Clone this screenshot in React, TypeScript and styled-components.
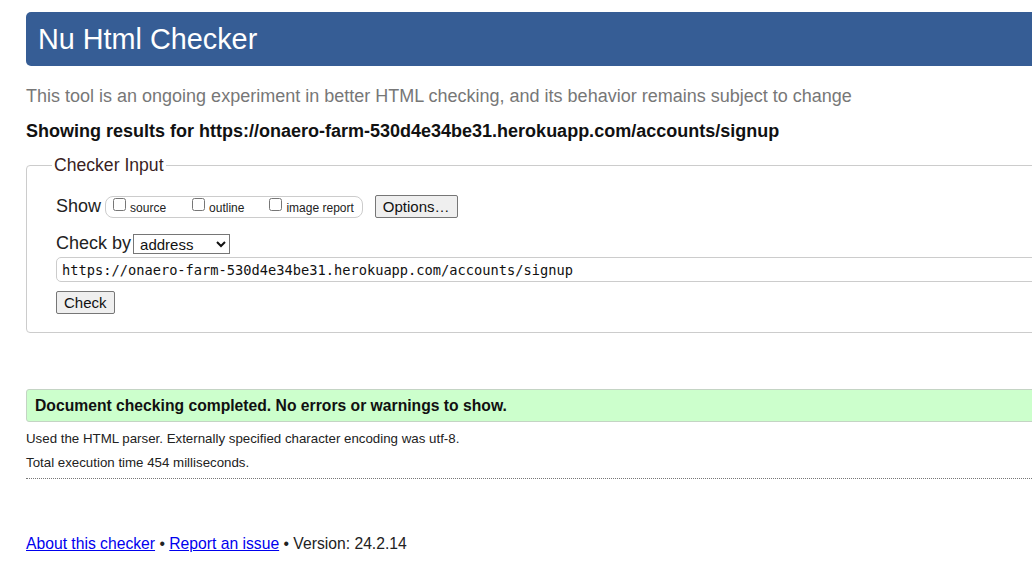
import React from "react";
import styled, { createGlobalStyle } from "styled-components";

const Global = createGlobalStyle`
  html, body { margin: 0; padding: 0; overflow: hidden; background: #fff; }
  body { font-family: "Liberation Sans", Arial, sans-serif; color: #222; }
`;

const Page = styled.div`
  width: 1140px;
  padding: 12px 0 0 26px;
`;

const Header = styled.h1`
  margin: 0;
  height: 54px;
  display: flex;
  align-items: center;
  padding-left: 12px;
  background: #365d95;
  border-radius: 5px;
  color: #fff;
  font-size: 28.8px;
  font-weight: normal;
`;

const Intro = styled.p`
  margin: 19px 0 0;
  font-size: 18px;
  line-height: 22px;
  color: #777;
`;

const ResultsFor = styled.h2`
  margin: 13px 0 0;
  font-size: 18px;
  line-height: 22px;
  font-weight: bold;
  color: #111;
`;

const Fieldset = styled.fieldset`
  margin: 13px 0 0;
  padding: 19px 0 18px 29px;
  border: 1px solid #ccc;
  border-radius: 4px;
  min-width: 0;
`;

const Legend = styled.legend`
  margin-left: -4px;
  padding: 0 2px;
  font-size: 17.6px;
  color: #3a1f1f;
`;

const Row = styled.div<{ mb: number }>`
  display: flex;
  align-items: center;
  margin-bottom: ${(p) => p.mb}px;
`;

const Label = styled.span`
  font-size: 18px;
  color: #222;
`;

const CheckGroup = styled.div`
  display: flex;
  align-items: center;
  height: 20px;
  margin-left: 4px;
  padding: 0 8px 0 6px;
  border: 1px solid #ccc;
  border-radius: 8px;
`;

const CheckItem = styled.label<{ gap: number }>`
  display: flex;
  align-items: center;
  font-size: 12px;
  color: #222;
  margin-right: ${(p) => p.gap}px;
  padding-top: 2px;
  input {
    margin: 0 4px 0 1px;
    width: 13px;
    height: 13px;
    position: relative;
    top: -3px;
  }
`;

const Button = styled.button<{ ml?: number }>`
  font-family: "Liberation Sans", Arial, sans-serif;
  font-size: 15px;
  color: #111;
  background: #efefef;
  border: 1px solid #767676;
  border-radius: 2px;
  padding: 1px 7px;
  height: 23px;
  margin-left: ${(p) => p.ml ?? 0}px;
`;

const Select = styled.select`
  font-family: "Liberation Sans", Arial, sans-serif;
  font-size: 15px;
  color: #111;
  width: 97px;
  height: 20px;
  margin-left: 2px;
  border: 1px solid #767676;
  border-radius: 0;
  background: #fff;
  padding: 0 0 0 2px;
`;

const UrlInput = styled.input`
  display: block;
  box-sizing: border-box;
  width: 1080px;
  height: 25px;
  margin: 0 0 9px;
  padding: 0 5px;
  border: 1px solid #ccc;
  border-radius: 5px;
  font-family: "DejaVu Sans Mono", "Liberation Mono", monospace;
  font-size: 13.7px;
  color: #111;
`;

const Spacer = styled.div`
  height: 56px;
`;

const Success = styled.p`
  margin: 0;
  height: 33px;
  box-sizing: border-box;
  display: flex;
  align-items: center;
  padding-left: 8px;
  background: #ccffcc;
  border: 1px solid #c4d4c4;
  border-radius: 3px;
  font-size: 15.7px;
  font-weight: bold;
  color: #111;
`;

const Detail = styled.p`
  margin: 0;
  font-size: 13.3px;
  line-height: 24px;
  color: #222;
`;

const FirstDetail = styled(Detail)`
  margin-top: 5px;
`;

const Dotted = styled.hr`
  margin: 3px 0 0;
  border: 0;
  border-top: 1px dotted #777;
`;

const Footer = styled.p`
  margin: 55px 0 0;
  font-size: 15.7px;
  line-height: 20px;
  color: #222;
  a { color: #0000ee; text-decoration: underline; }
`;

export default function App() {
  return (
    <>
      <Global />
      <Page>
        <Header>Nu Html Checker</Header>
        <Intro>This tool is an ongoing experiment in better HTML checking, and its behavior remains subject to change</Intro>
        <ResultsFor>Showing results for https://onaero-farm-530d4e34be31.herokuapp.com/accounts/signup</ResultsFor>
        <Fieldset>
          <Legend>Checker Input</Legend>
          <Row mb={15}>
            <Label>Show</Label>
            <CheckGroup>
              <CheckItem gap={25}><input type="checkbox" />source</CheckItem>
              <CheckItem gap={24}><input type="checkbox" />outline</CheckItem>
              <CheckItem gap={0}><input type="checkbox" />image report</CheckItem>
            </CheckGroup>
            <Button ml={12}>Options…</Button>
          </Row>
          <Row mb={3}>
            <Label>Check by</Label>
            <Select defaultValue="address">
              <option value="address">address</option>
              <option value="file">file upload</option>
              <option value="text">text input</option>
            </Select>
          </Row>
          <UrlInput readOnly value="https://onaero-farm-530d4e34be31.herokuapp.com/accounts/signup" />
          <Button>Check</Button>
        </Fieldset>
        <Spacer />
        <Success>Document checking completed. No errors or warnings to show.</Success>
        <FirstDetail>Used the HTML parser. Externally specified character encoding was utf-8.</FirstDetail>
        <Detail>Total execution time 454 milliseconds.</Detail>
        <Dotted />
        <Footer>
          <a href="#about">About this checker</a> • <a href="#report">Report an issue</a> • Version: 24.2.14
        </Footer>
      </Page>
    </>
  );
}
